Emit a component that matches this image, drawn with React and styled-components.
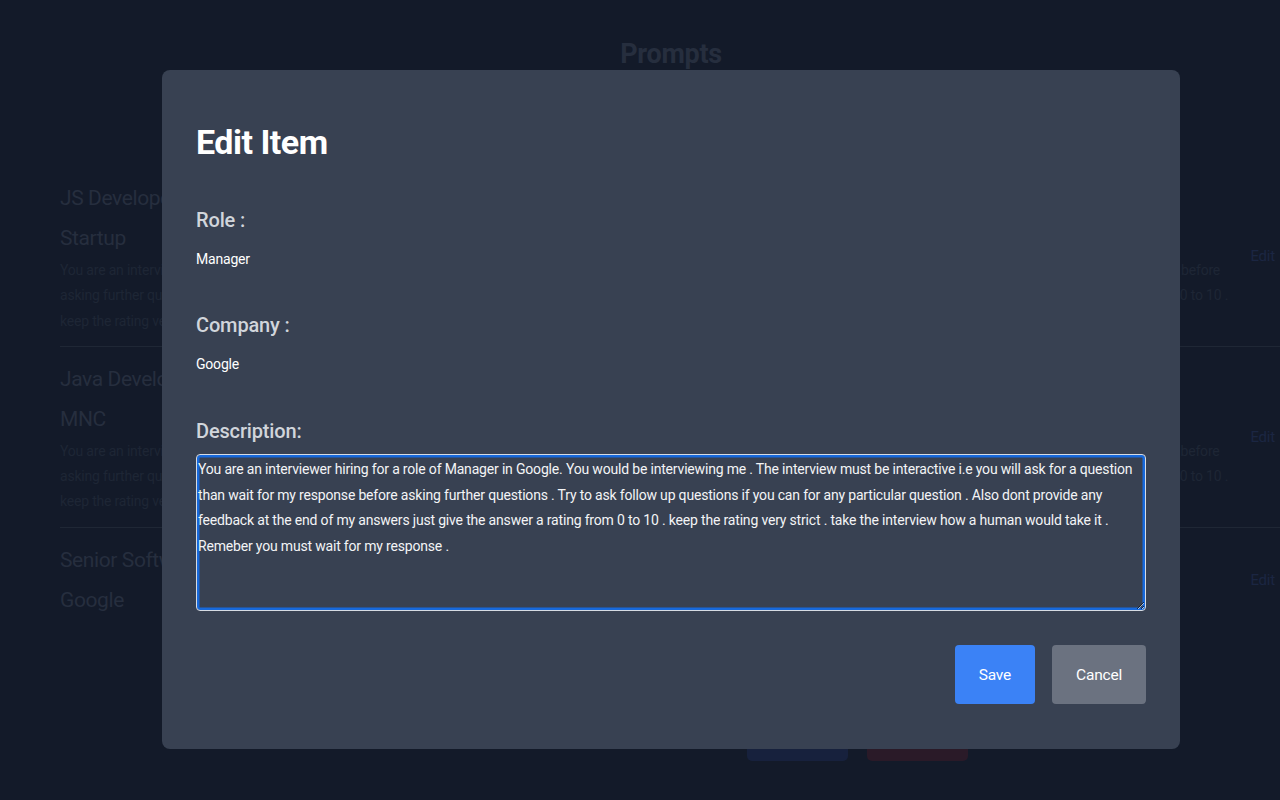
import React from "react";
import styled, { createGlobalStyle } from "styled-components";

const GlobalStyle = createGlobalStyle`
  html, body {
    margin: 0;
    padding: 0;
    background: #131a29;
    font-family: "Roboto", "Liberation Sans", sans-serif;
  }
`;

const Page = styled.div`
  min-height: 800px;
  background: #131a29;
  overflow: hidden;
`;

const Heading = styled.h1`
  margin: 0;
  padding-top: 36px;
  padding-left: 62px;
  text-align: center;
  font-size: 27px;
  line-height: 36px;
  font-weight: 700;
  letter-spacing: -0.3px;
  color: #262e3e;
`;

const List = styled.div`
  display: flex;
  flex-direction: column;
  padding: 94px 0 0 60px;
`;

const Item = styled.div`
  display: flex;
  align-items: center;
  padding: 12px 0;
  border-bottom: ${(p) => (p.last ? "none" : "1px solid #1f2735")};
`;

const ItemBody = styled.div`
  flex: 1;
`;

const ItemTitle = styled.div`
  font-size: 21px;
  line-height: 40px;
  letter-spacing: -0.4px;
  color: #262e3e;
`;

const ItemLine = styled.div`
  font-size: 14px;
  line-height: 25.3px;
  letter-spacing: -0.2px;
  white-space: nowrap;
  color: #1e2635;
`;

const EditLink = styled.a`
  margin-left: auto;
  padding: 0 5px 0 20px;
  font-size: 15px;
  letter-spacing: -0.2px;
  color: #1b2642;
  text-decoration: none;
`;

const BottomBar = styled.div`
  display: flex;
  gap: 19px;
  padding: 89px 0 0 747px;
`;

const GhostButton = styled.div`
  width: 101px;
  height: 40px;
  border-radius: 5px;
  background: ${(p) => p.bg};
`;

const Overlay = styled.div`
  position: fixed;
  inset: 0;
  display: flex;
  justify-content: center;
  align-items: flex-start;
  padding: 70px 0 0 62px;
`;

const Modal = styled.div`
  width: 1018px;
  box-sizing: border-box;
  background: #384152;
  border-radius: 8px;
  padding: 52px 34px 45px;
  display: flex;
  flex-direction: column;
`;

const Title = styled.h2`
  margin: 0 0 44px;
  font-size: 34px;
  line-height: 40px;
  font-weight: 700;
  letter-spacing: -0.5px;
  color: #ffffff;
`;

const Field = styled.div`
  display: flex;
  flex-direction: column;
  margin-bottom: ${(p) => p.gap || "42px"};
`;

const Label = styled.label`
  font-size: 20px;
  line-height: 28px;
  font-weight: 500;
  letter-spacing: -0.15px;
  color: #d1d5db;
  margin-bottom: ${(p) => p.gap || "15px"};
`;

const Value = styled.div`
  font-size: 14px;
  line-height: 20px;
  letter-spacing: -0.2px;
  color: #ffffff;
`;

const TextArea = styled.textarea`
  box-sizing: border-box;
  width: 100%;
  height: 157px;
  margin: 0;
  padding: 2px 1px;
  background: #384152;
  color: #f3f4f6;
  font-family: inherit;
  font-size: 14px;
  line-height: 25.7px;
  letter-spacing: -0.18px;
  border: 1px solid #d6dbe3;
  border-radius: 4px;
  box-shadow: inset 0 0 0 2.5px #1769dc;
  outline: none;
  resize: vertical;
`;

const Actions = styled.div`
  display: flex;
  justify-content: flex-end;
  gap: 17px;
  margin-top: 34px;
`;

const Button = styled.button`
  height: 59px;
  padding: 0 24px;
  border: none;
  border-radius: 4px;
  font-family: inherit;
  font-size: 15.5px;
  letter-spacing: -0.2px;
  color: #ffffff;
  background: ${(p) => (p.secondary ? "#6b7280" : "#3b82f6")};
  cursor: pointer;
`;

const desc = (role, company) =>
  `You are an interviewer hiring for a role of ${role} in ${company}. You would be interviewing me . The interview must be interactive i.e you will ask for a question than wait for my response before asking further questions . Try to ask follow up questions if you can for any particular question . Also dont provide any feedback at the end of my answers just give the answer a rating from 0 to 10 . keep the rating very strict . take the interview how a human would take it . Remeber you must wait for my response .`;

const descLines = (role, company) => [
  `You are an interviewer hiring for a role of ${role} in ${company}. You would be interviewing me . The interview must be interactive i.e you will ask for a question than wait for my response before`,
  "asking further questions . Try to ask follow up questions if you can for any particular question . Also dont provide any feedback at the end of my answers just give the answer a rating from 0 to 10 .",
  "keep the rating very strict . take the interview how a human would take it . Remeber you must wait for my response .",
];

const prompts = [
  { role: "JS Developer", company: "Startup", text: true },
  { role: "Java Developer", company: "MNC", text: true },
  { role: "Senior Software Engineer", company: "Google", text: false },
];

export default function App() {
  return (
    <Page>
      <GlobalStyle />
      <Heading>Prompts</Heading>
      <List>
        {prompts.map((p, i) => (
          <Item key={p.role} last={i === prompts.length - 1}>
            <ItemBody>
              <ItemTitle>{p.role}</ItemTitle>
              <ItemTitle>{p.company}</ItemTitle>
              {p.text &&
                descLines(p.role, p.company).map((line) => (
                  <ItemLine key={line}>{line}</ItemLine>
                ))}
            </ItemBody>
            <EditLink href="#">Edit</EditLink>
          </Item>
        ))}
      </List>
      <BottomBar>
        <GhostButton bg="#17213d" />
        <GhostButton bg="#2a1a28" />
      </BottomBar>

      <Overlay>
        <Modal>
          <Title>Edit Item</Title>
          <Field>
            <Label>Role :</Label>
            <Value>Manager</Value>
          </Field>
          <Field gap="43px">
            <Label>Company :</Label>
            <Value>Google</Value>
          </Field>
          <Field gap="0">
            <Label gap="9px">Description:</Label>
            <TextArea defaultValue={desc("Manager", "Google")} spellCheck={false} />
          </Field>
          <Actions>
            <Button>Save</Button>
            <Button secondary>Cancel</Button>
          </Actions>
        </Modal>
      </Overlay>
    </Page>
  );
}
